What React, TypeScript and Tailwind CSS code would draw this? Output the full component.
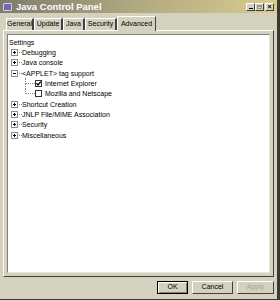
import React from 'react';

const font = { fontFamily: '"Liberation Sans", Arial, sans-serif' };

const Expander: React.FC<{ open?: boolean }> = ({ open }) => (
  <svg width="7" height="7" viewBox="0 0 7 7" className="shrink-0">
    <rect x="0.5" y="0.5" width="6" height="6" fill="#fff" stroke="#8a8a8a" />
    <line x1="2" y1="3.5" x2="5" y2="3.5" stroke="#000" />
    {!open && <line x1="3.5" y1="2" x2="3.5" y2="5" stroke="#000" />}
  </svg>
);

const CheckBox: React.FC<{ checked?: boolean }> = ({ checked }) => (
  <svg width="7" height="7" viewBox="0 0 7 7" className="shrink-0">
    <rect x="0.5" y="0.5" width="6" height="6" fill="#fff" stroke="#333" />
    {checked && <path d="M1.5 3.3 L3 5 L5.8 1.6" fill="none" stroke="#000" strokeWidth="1.3" />}
  </svg>
);

const TopNode: React.FC<{ label: string; open?: boolean }> = ({ label, open }) => (
  <div className="flex items-center h-[10.35px] pl-[2px]">
    <Expander open={open} />
    <span className="w-[3px] mx-[0.5px] border-t border-dotted border-[#8a8a8a]" />
    <span className="whitespace-nowrap leading-none">{label}</span>
  </div>
);

const ChildNode: React.FC<{ label: string; checked?: boolean; last?: boolean }> = ({ label, checked, last }) => (
  <div className="flex items-stretch h-[10.35px] pl-[16px]">
    <div className="w-[10px] flex flex-col">
      <div className="h-1/2 border-l border-b border-dotted border-[#8a8a8a]" />
      <div className={'h-1/2 border-l border-dotted ' + (last ? 'border-transparent' : 'border-[#8a8a8a]')} />
    </div>
    <div className="flex items-center gap-[3px]">
      <CheckBox checked={checked} />
      <span className="whitespace-nowrap leading-none">{label}</span>
    </div>
  </div>
);

const Tab: React.FC<{ label: string; w: string; active?: boolean }> = ({ label, w, active }) =>
  active ? (
    <div className={`${w} h-[15px] -mb-px flex items-center justify-center bg-[#d4d1bf] border-t border-l border-white border-r border-r-[#404040] relative z-10`}>
      {label}
    </div>
  ) : (
    <div className={`${w} h-[12px] flex items-center justify-center border-t border-l border-white border-r-2 border-r-[#404040]`}>
      {label}
    </div>
  );

const Btn: React.FC<{ label: string; w: string; def?: boolean; disabled?: boolean }> = ({ label, w, def, disabled }) => (
  <div
    className={`${w} h-[13px] flex items-center justify-center ${
      def ? 'border border-black shadow-[inset_1px_1px_0_#fff,inset_-1px_-1px_0_#808080]' : 'border border-t-white border-l-white border-r-[#404040] border-b-[#404040]'
    } ${disabled ? 'text-[#a8a594]' : 'text-black'}`}
  >
    {label}
  </div>
);

export default function App() {
  return (
    <div style={font} className="w-[280px] h-[300px] bg-[#d4d1bf] text-[7px] text-black overflow-hidden flex flex-col border-r-[3px] border-r-[#3a3a2e] border-b border-b-[#3a3a2e]">
      {/* title bar */}
      <div className="h-[13px] shrink-0 flex items-center pl-[3px] pr-[3px] bg-gradient-to-r from-[#7e7b6c] via-[#b2aa80] to-[#d9cc8e]">
        <div className="w-[9px] h-[8px] rounded-[1px] bg-[#6c6ab8] border border-[#d8d0d0] mr-[4px]" />
        <span className="text-white font-bold text-[9.5px] leading-none">Java Control Panel</span>
        <div className="ml-auto flex items-center gap-0">
          <div className="w-[9px] h-[8px] bg-[#d4d1bf] border border-t-white border-l-white border-r-[#404040] border-b-[#404040] flex items-end justify-center pb-[1px]">
            <div className="w-[4px] h-[1px] bg-black" />
          </div>
          <div className="w-[9px] h-[8px] bg-[#d4d1bf] border border-t-white border-l-white border-r-[#404040] border-b-[#404040] flex items-center justify-center">
            <div className="w-[5px] h-[4px] border border-[#9a9890] border-t-2" />
          </div>
          <div className="w-[9px] h-[8px] ml-[1px] bg-[#d4d1bf] border border-t-white border-l-white border-r-[#404040] border-b-[#404040] flex items-center justify-center text-[7px] font-bold leading-none">
            ×
          </div>
        </div>
      </div>

      {/* tabs */}
      <div className="flex items-end pl-[6px] mt-[1px] h-[16px] shrink-0">
        <Tab label="General" w="w-[28px]" />
        <Tab label="Update" w="w-[29px]" />
        <Tab label="Java" w="w-[22px]" />
        <Tab label="Security" w="w-[32px]" />
        <Tab label="Advanced" w="w-[39px]" active />
      </div>

      {/* panel */}
      <div className="ml-[3px] mr-[3px] h-[247px] shrink-0 border-t border-l border-white border-r border-b border-r-[#404040] border-b-[#404040] p-[3px]">
        <div className="h-full bg-white border border-t-[#808080] border-l-[#808080] border-r-[#e8e6da] border-b-[#e8e6da] pt-[2px] pl-px">
          <div className="flex items-center h-[10.35px] leading-none">Settings</div>
          <TopNode label="Debugging" />
          <TopNode label="Java console" />
          <TopNode label="<APPLET> tag support" open />
          <ChildNode label="Internet Explorer" checked />
          <ChildNode label="Mozilla and Netscape" last />
          <TopNode label="Shortcut Creation" />
          <TopNode label="JNLP File/MIME Association" />
          <TopNode label="Security" />
          <TopNode label="Miscellaneous" />
        </div>
      </div>

      {/* buttons */}
      <div className="flex-1 flex items-center justify-end gap-[4px] pr-[3px] pb-[1px]">
        <Btn label="OK" w="w-[31px]" def />
        <Btn label="Cancel" w="w-[41px]" />
        <Btn label="Apply" w="w-[37px]" disabled />
      </div>
    </div>
  );
}
